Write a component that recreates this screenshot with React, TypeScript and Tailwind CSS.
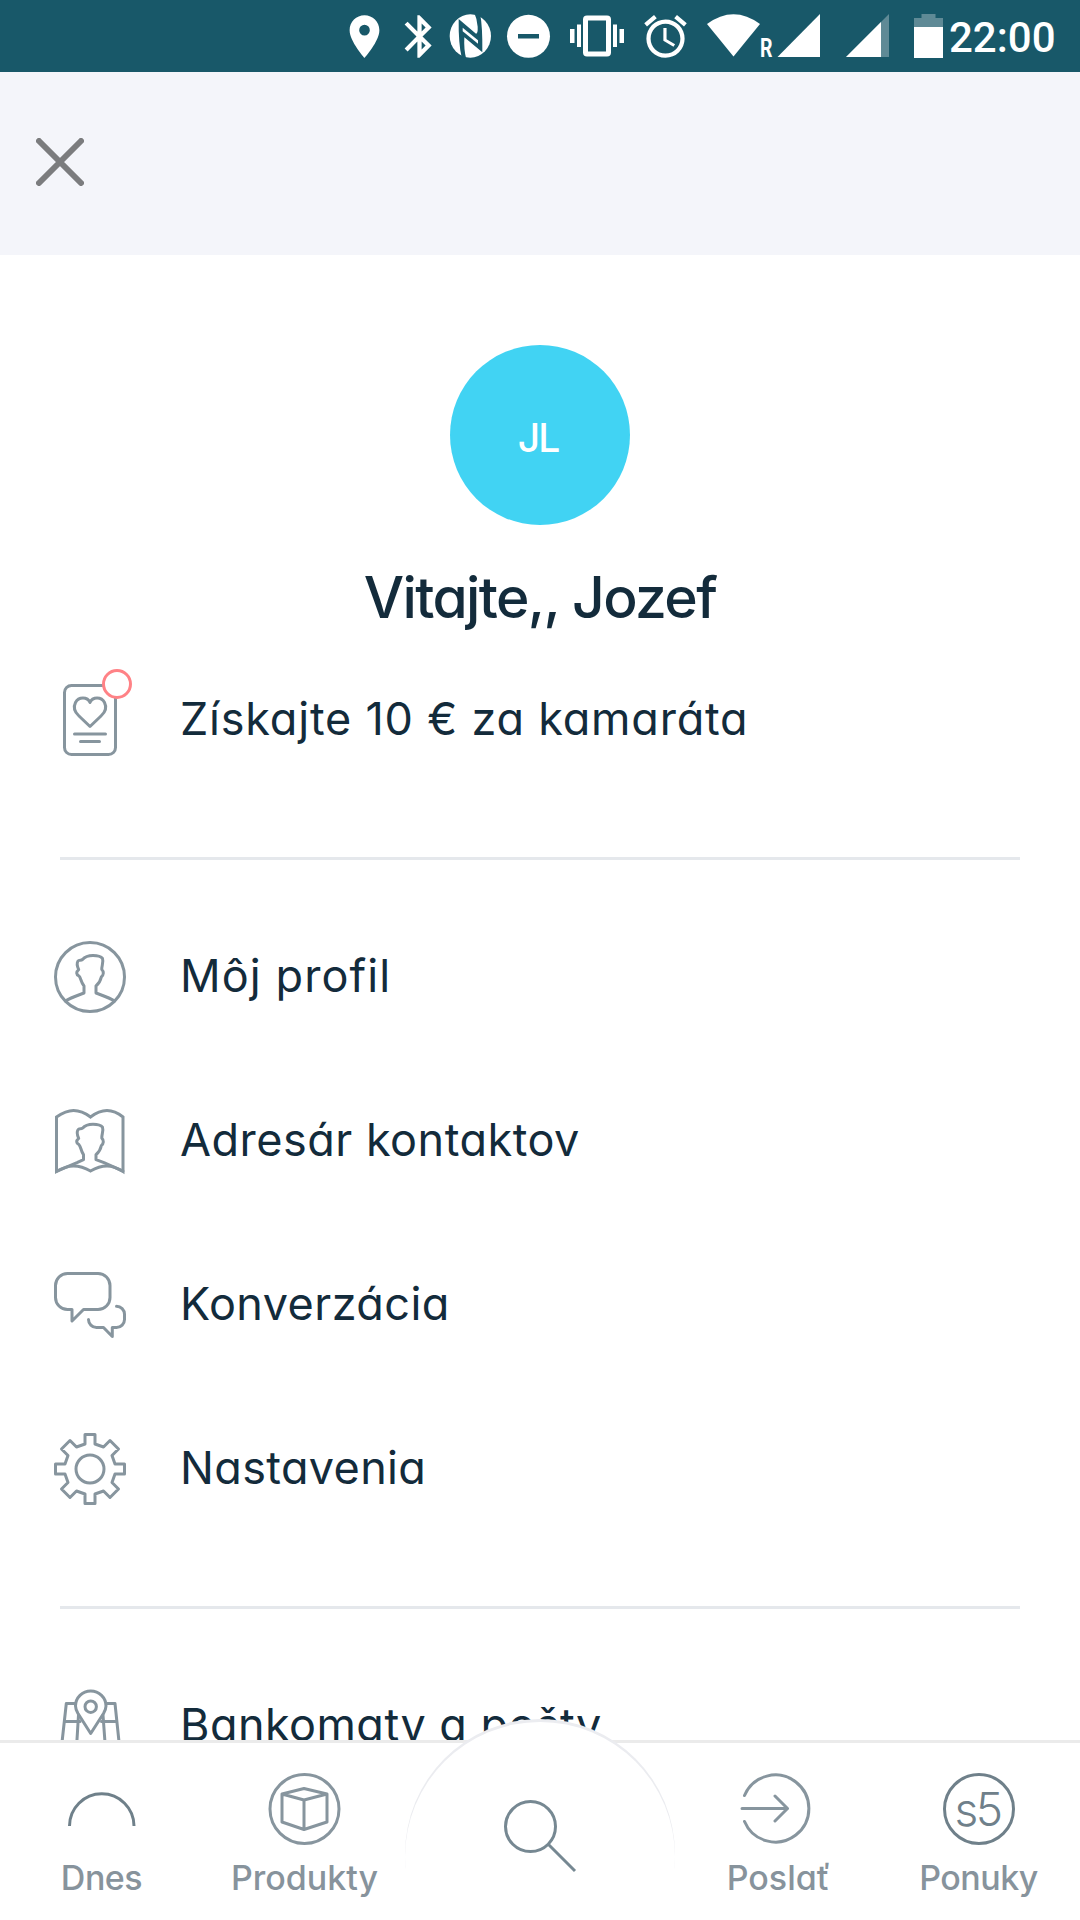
import React from 'react';
import { MdAlarm, MdBluetooth, MdLocationOn } from 'react-icons/md';

const StatusBar = () => {
  return (
    <div className="flex h-[72px] shrink-0 items-center bg-[#185869] pl-[339px] text-white">
      <MdLocationOn className="size-[51px]" />
      <MdBluetooth className="ml-1 size-[51px]" />
      {/* NFC */}
      <svg className="h-[72px] w-[51px]" viewBox="0 0 153 216">
        <ellipse cx="76" cy="108" rx="62" ry="65" fill="#fff" />
        <path d="M41 57 L93 101 Q99 100 98 80 Q96 56 87 36 L105 40 Q113 80 112 157 L58 112 Q56 150 64 178 L50 172 Q40 130 41 57Z" fill="#185869" />
        <path d="M53 83 L99 121 L99 131 L53 94Z" fill="#fff" />
      </svg>
      {/* Do not disturb */}
      <svg className="ml-[7px] h-[72px] w-[51px]" viewBox="0 0 51 72">
        <circle cx="25.5" cy="36.3" r="21.5" fill="#fff" />
        <path d="M15 34h21v4.5H15z" fill="#185869" />
      </svg>
      {/* Vibrate */}
      <svg className="ml-[13px] h-[72px] w-[60px]" viewBox="0 0 60 72" fill="#fff">
        <path fillRule="evenodd" d="M20 15.500h20a4 4 0 0 1 4 4v33a4 4 0 0 1-4 4H20a4 4 0 0 1-4-4v-33a4 4 0 0 1 4-4zM21 20.500v31h18v-31z" />
        <path d="M3 29h4.500v14H3zM10 24.500h4v22.500h-4zM46 24.500h4v22.500h-4zM52.500 29H57v14h-4.500z" />
      </svg>
      <MdAlarm className="ml-[13px] size-[51px]" />
      {/* Wifi */}
      <svg className="ml-[13px] h-[72px] w-[56px]" viewBox="0 0 56 72" fill="#fff">
        <path d="M29.500 56.500 L3 24 Q29.500 4.500 56 24Z" />
      </svg>
      <span className="flex h-[72px] w-4 items-end pb-[9px] font-['Roboto'] text-[26px] leading-[30px] font-bold">
        <span className="origin-left scale-x-75">R</span>
      </span>
      <svg className="h-[72px] w-[45px]" viewBox="0 0 45 72" fill="#fff">
        <path d="M1.500 57H44V14z" />
      </svg>
      <svg className="ml-6 h-[72px] w-[45px]" viewBox="0 0 45 72">
        <path d="M1 57H44V14z" fill="#5f8a96" />
        <path d="M1 57H36V22z" fill="#fff" />
      </svg>
      {/* Battery */}
      <svg className="ml-[22px] h-[72px] w-[33px]" viewBox="0 0 33 72">
        <path d="M2 27V18h7.500v-4h14v4H31v9z" fill="#5f8a96" />
        <path d="M2 27h29v31H2z" fill="#fff" />
      </svg>
      <span className="ml-[4px] pt-[3px] font-['Roboto'] text-[42px] leading-[69px] font-medium">22:00</span>
    </div>
  );
};

const Icon = ({ children }: { children: React.ReactNode }) => (
  <svg
    className="size-[72px] shrink-0 overflow-visible"
    viewBox="-36 -36 72 72"
    fill="none"
    stroke="#87959e"
    strokeWidth="3"
    strokeLinecap="round"
    strokeLinejoin="round"
  >
    {children}
  </svg>
);

const head =
  'C-9.500 4.500 -9 1 -11 -1 C-14 -2.500 -14 -5 -11.300 -7.300 C-12.500 -10 -13.300 -14 -12 -16 C-11 -17.500 -9 -16.300 -7.500 -17.500 C-4.500 -21 -1 -21.500 3 -21.500 C8 -21.500 11 -20.500 12.500 -18.500 C13.800 -15 11.500 -11 11.800 -7.500 C14 -5.500 13.800 -2 11.300 0 C10.500 4 9.500 6 6 9';

const InviteIcon = () => (
  <Icon>
    <rect x="-25.5" y="-34.5" width="51" height="69" rx="7" />
    <path d="M0 6.500 L-11 -4 C-16 -8.500 -16.500 -13.500 -14.500 -17.500 C-11.500 -23.500 -2.500 -23.500 0 -17.500 C2.500 -23.500 11.500 -23.500 14.500 -17.500 C16.500 -13.500 16 -8.500 11 -4Z" />
    <path d="M-15.500 14H15.500M-9.500 21.500H9.500" />
    <circle cx="27" cy="-36" r="13.5" fill="#fff" stroke="#ff8286" />
  </Icon>
);

const ProfileIcon = () => (
  <Icon>
    <circle r="34.5" />
    <path d={`M-24.500 24 C-20 21 -14 19 -6 16 V9 ${head} V16 C14 19 20 21 24.500 24`} />
  </Icon>
);

const ContactsIcon = () => (
  <Icon>
    <path d="M.5 -24 Q-8 -30.500 -16.500 -30.500 Q-24 -30.500 -33.500 -24 V30.500 Q-24 25 -16.500 25 Q-8 25 .5 30 Q9 25 17 25 Q24 25 33 30.500 V-24 Q25 -30.500 17 -30.500 Q9 -30.500 .5 -24Z" strokeLinejoin="miter" />
    <g transform="translate(0 4.700)">
      <path d={`M-33 25.500 L-13 17 L-6.500 14 V9 ${head} V14 L14 17 L33 25.500`} />
    </g>
  </Icon>
);

const ChatIcon = () => (
  <Icon>
    <path d="M-22.500 -31.500H8a12 12 0 0 1 12 12V-7.500a12 12 0 0 1-12 12H-6.500L-18 16V4.500H-22.500a12 12 0 0 1-12-12V-19.500a12 12 0 0 1 12-12z" />
    <path d="M26.500 1.300a8 8 0 0 1 8 8V14.500a8 8 0 0 1-8 8H22.300V31.500L13.500 22.500H6.500A8 8 0 0 1-1.500 14.500" />
  </Icon>
);

const SettingsIcon = () => (
  <Icon>
    <circle r="14" />
    <path d="M-5 -34.500H5V-25L13.500 -22L20 -28.500L28.500 -20L22 -13.500L25 -5H34.500V5H25L22 13.500L28.500 20L20 28.500L13.500 22L5 25V34.500H-5V25L-13.500 22L-20 28.500L-28.500 20L-22 13.500L-25 5H-34.500V-5H-25L-22 -13.500L-28.500 -20L-20 -28.500L-13.500 -22L-5 -25Z" />
  </Icon>
);

const BranchesIcon = () => (
  <Icon>
    <path d="M.7 7.500L-12 -12.500C-14 -16 -14.500 -18 -14.500 -20A15.200 15 0 0 1 16 -20C16 -18 15.500 -16 13.500 -12.500Z" />
    <circle cx=".7" cy="-19.3" r="5.700" />
    <path d="M-15 -22.500H-23.700L-29.500 30M16.500 -22.500H25L30.500 30M-25.500 -4.500H-10M11.500 -4.500H27M-11.500 -11L-14 30M13 -11L16 30" />
  </Icon>
);

const ProductsIcon = () => (
  <Icon>
    <g transform="translate(-.5 0)">
      <circle r="34.5" />
      <path d="M-.5 -20.500L22.500 -15V13L-.5 20.500L-22.500 13V-15ZM-22.500 -15L-.5 -9L22.500 -15M-.5 -9V20.500" />
    </g>
  </Icon>
);

const SendIcon = () => (
  <Icon>
    <path d="M-31.500 -13.500A33.500 33.500 0 1 1 -31.500 12.500M-34 -.5H11.500M-1 -13L11.500 -.5L-1 12" />
  </Icon>
);

const menu = [
  { label: 'Môj profil', icon: <ProfileIcon />, style: 'tracking-[1.1px]' },
  { label: 'Adresár kontaktov', icon: <ContactsIcon />, style: 'tracking-[0.5px]' },
  { label: 'Konverzácia', icon: <ChatIcon />, style: 'tracking-[0.45px]' },
  { label: 'Nastavenia', icon: <SettingsIcon />, style: 'tracking-[0.35px]' },
];

const MenuRow = ({ icon, label, style }: { icon: React.ReactNode; label: string; style: string }) => (
  <div className="flex h-[164px] shrink-0 items-center gap-[54px] pl-[54px]">
    {icon}
    <span className={`pb-0.5 text-[45px] leading-[60px] whitespace-nowrap ${style}`}>{label}</span>
  </div>
);

const Divider = () => <div className="mx-[60px] h-[3px] shrink-0 bg-[#e5e8ec]" />;

const NavItem = ({ icon, label, style }: { icon: React.ReactNode; label: string; style: string }) => (
  <div className="flex w-[203px] flex-col items-center pt-[30px] text-[#87939c]">
    {icon}
    <span className={`mt-3 text-[34px] leading-[42px] font-medium ${style}`}>{label}</span>
  </div>
);

const BottomNav = () => {
  return (
    <nav className="relative flex h-[180px] shrink-0 border-t-[3px] border-[#ebebeb] bg-white">
      <NavItem
        icon={<Icon><path d="M-32.500 17A32.200 32.200 0 0 1 32 17" stroke="#6f808a" strokeLinecap="butt" /></Icon>}
        label="Dnes"
        style="tracking-[-0.5px]"
      />
      <NavItem icon={<ProductsIcon />} label="Produkty" style="tracking-[0]" />
      <div className="flex flex-1 justify-center">
        {/* Raised search button, its rim is thickest at the top */}
        <svg className="absolute -top-[24px] h-[201px] w-[270px]" viewBox="0 0 270 201">
          <circle cx="135" cy="135" r="135" fill="#ebecf0" />
          <circle cx="135" cy="138" r="135" fill="#fff" />
          <path d="M0 150h270v51H0z" fill="#fff" />
          <g fill="none" stroke="#768892" strokeWidth="3">
            <circle cx="125.5" cy="107.600" r="25" />
            <path d="M143.500 125.500L170 152" />
          </g>
        </svg>
      </div>
      <NavItem icon={<SendIcon />} label="Poslať" style="pl-[6px] tracking-[0]" />
      <NavItem
        icon={
          <span className="flex size-[72px] items-center justify-center rounded-full border-[3px] border-[#6f808a] pr-0.5 text-[46px] leading-none font-light tracking-[-2.5px] text-[#6f808a]">
            s5
          </span>
        }
        label="Ponuky"
        style="tracking-[-0.5px]"
      />
    </nav>
  );
};

const App = () => {
  return (
    <div className="flex h-[1920px] w-[1080px] flex-col overflow-hidden bg-white font-['Inter',sans-serif] text-[#132b3b] [font-feature-settings:'cv11'_1]">
      <StatusBar />

      {/* Header */}
      <header className="flex h-[183px] shrink-0 items-center bg-[#f4f5fa] pl-9">
        <svg className="mb-[3px] size-12" viewBox="0 0 48 48" stroke="#7b7c7e" strokeWidth="6" strokeLinecap="round">
          <path d="M3 3L45 45M45 3L3 45" />
        </svg>
      </header>

      <main className="flex min-h-0 flex-1 flex-col overflow-hidden">
        <div className="flex h-[383px] shrink-0 flex-col items-center pt-[90px]">
          <div className="flex size-[180px] items-center justify-center rounded-full bg-[#41d3f3] pt-1.5 pr-1 text-[39px] font-medium tracking-[-2px] text-white">
            JL
          </div>
          <h1 className="mt-[37px] text-[57px] leading-[72px] font-medium tracking-[-1.65px]">Vitajte,, Jozef</h1>
        </div>

        <MenuRow icon={<InviteIcon />} label="Získajte 10 € za kamaráta" style="tracking-[0.8px]" />
        <div className="h-[55px] shrink-0" />
        <Divider />
        <div className="h-[35px] shrink-0" />
        {menu.map((item) => (
          <MenuRow key={item.label} {...item} />
        ))}
        <div className="h-[55px] shrink-0" />
        <Divider />
        <div className="h-[35px] shrink-0" />
        <MenuRow icon={<BranchesIcon />} label="Bankomaty a pošty" style="tracking-[0.45px]" />
      </main>

      <BottomNav />
    </div>
  );
};

export default App;
